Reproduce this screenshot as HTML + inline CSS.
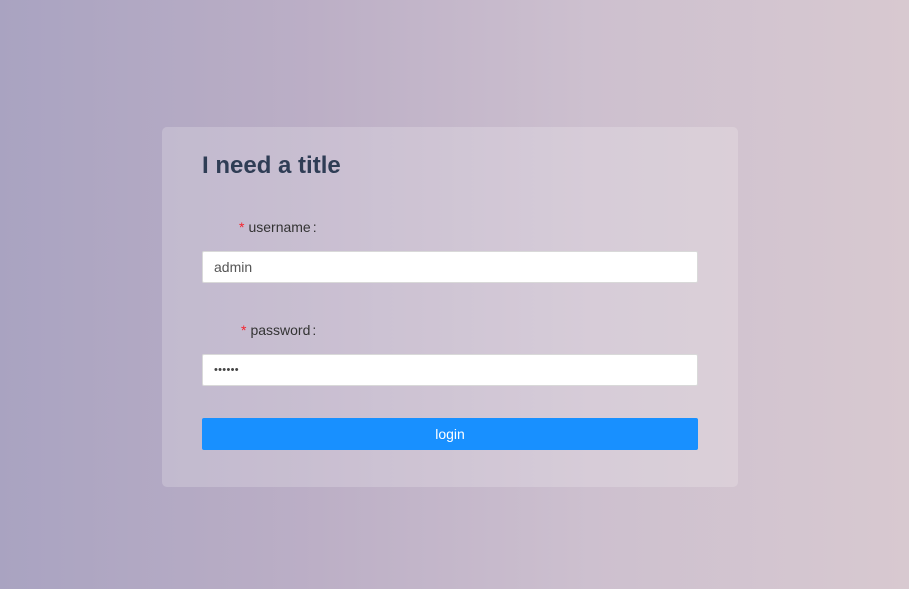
<!DOCTYPE html>
<html><head><meta charset="utf-8"><style>
*{box-sizing:border-box;margin:0;padding:0}
body{width:909px;height:589px;overflow:hidden;background:linear-gradient(90deg,#a9a3c1 0%,#bcafc6 35%,#cdc0cf 65%,#d8c9d0 100%);font-family:"Liberation Sans",Arial,sans-serif;position:relative}
.card{position:absolute;left:162px;top:127px;width:576px;height:360px;background:rgba(255,255,255,0.2);border-radius:5px}
h1{position:absolute;left:40px;top:25px;font-size:24px;font-weight:bold;color:#2f3d55}
.lbl{position:absolute;font-size:14px;color:#333}
.lbl b{color:#f5222d;font-weight:normal;margin-right:4px}
.inp{position:absolute;left:40px;width:496px;height:32px;background:#fff;border:1px solid #d9d9d9;border-radius:2px;font-size:14px;color:#555;padding:7px 11px}
.btn{position:absolute;left:40px;top:291px;width:496px;height:32px;background:#1890ff;border-radius:2px;color:#fff;font-size:14px;text-align:center;line-height:32px}
</style></head><body>
<div class="card">
<h1>I need a title</h1>
<div class="lbl" style="left:77px;top:92px"><b>*</b>username<span style="margin-left:2px">:</span></div>
<div class="inp" style="top:124px">admin</div>
<div class="lbl" style="left:79px;top:195px"><b>*</b>password<span style="margin-left:2px">:</span></div>
<div class="inp" style="top:227px;font-size:11px;padding-top:9px;letter-spacing:0.3px;color:#444">••••••</div>
<div class="btn">login</div>
</div>
</body></html>
